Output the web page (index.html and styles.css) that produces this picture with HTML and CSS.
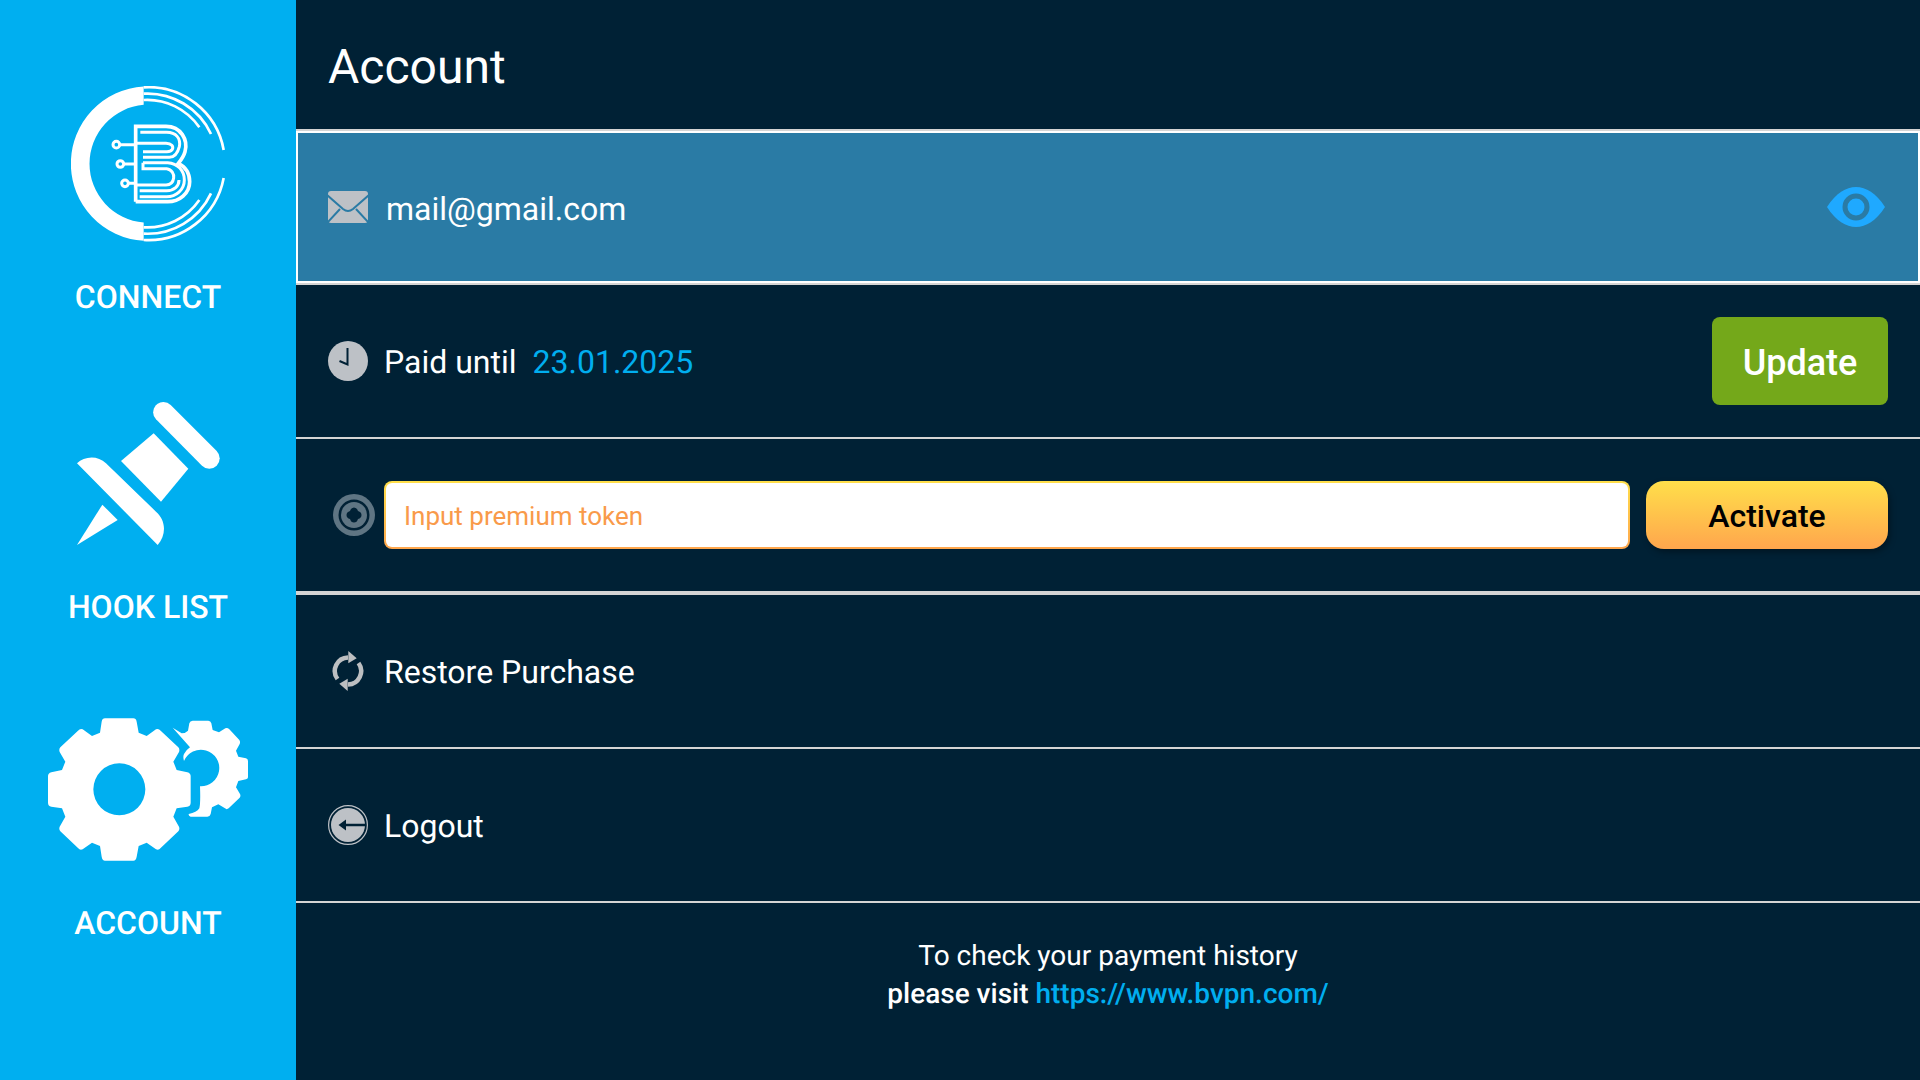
FILE: index.html
```html
<!DOCTYPE html>
<html lang="en">
<head>
<meta charset="utf-8">
<title>Account</title>
<link rel="stylesheet" href="styles.css">
</head>
<body>
<div class="app">
  <nav class="sidebar">
    <a class="nav-item nav-connect">
      <svg class="icon-logo" viewBox="210 108 465 468">
        <path class="fill-white" d="M428 109.400A232 232 0 0 0 428 572.600V517.400A177 177 0 0 1 428 164.600Z"/>
        <g class="logo-arcs">
          <path d="M428 112A229 229 0 0 1 668 300M428 131A210 210 0 0 1 630 252M428 150A190 190 0 0 1 595 232"/>
          <path d="M428 570A229 229 0 0 0 668 384M428 551A210 210 0 0 0 630 430M428 532A190 190 0 0 0 595 450"/>
        </g>
        <g class="logo-lines">
          <path class="logo-outer" d="M404 455V229H495C540 229 562 270 552 305C548 320 540 330 532 340C552 350 566 370 566 395C566 430 535 455 500 455H404"/>
          <path d="M418 247H497C525 247 540 265 535 290C530 310 520 322 505 322H426"/>
          <path d="M404 280H495C512 280 518 290 514 298C510 304 505 305 498 305H426"/>
          <path d="M426 338H500C530 340 550 362 550 390C550 420 525 440 497 440H416"/>
          <path d="M426 338V356H497C512 358 520 372 518 384C516 398 508 405 495 405H404M416 422H497C520 422 534 408 534 390"/>
          <path d="M356 284H404M368 342H404M382 400H404"/>
          <circle cx="346" cy="284" r="10"/>
          <circle cx="358" cy="342" r="10"/>
          <circle cx="372" cy="400" r="10"/>
        </g>
      </svg>
      <span class="nav-label">CONNECT</span>
    </a>
    <a class="nav-item nav-hook">
      <svg class="icon-pin" viewBox="228 66 429 429">
        <path class="fill-white" d="M487 66A31 31 0 0 0 465 118L603 257A31 31 0 0 0 647 213L509 75A31 31 0 0 0 487 66Z"/>
        <path class="fill-white" d="M458 160L562 266L480 365L360 243Z"/>
        <path class="fill-white" d="M228 250C250 228 290 225 315 250L465 395C495 420 497 465 470 495Z"/>
        <path class="fill-white" d="M228 495L304 374L350 420Z"/>
      </svg>
      <span class="nav-label">HOOK LIST</span>
    </a>
    <a class="nav-item nav-account">
      <svg class="icon-gears" viewBox="144 85 600 427">
        <path class="fill-white" fill-rule="evenodd" d="M315 85H400Q408 85 410 95L416 128L440 138L468 118Q476 115 482 122L535 172Q540 178 537 186L520 215L530 240L562 247Q572 250 572 258V338Q572 348 562 350L530 355L520 380L537 410Q540 418 535 424L482 474Q476 482 468 478L440 458L416 468L410 500Q408 512 400 512H315Q307 512 305 500L300 468L276 458L248 478Q240 482 234 474L181 424Q176 418 179 410L196 380L186 355L154 350Q144 348 144 338V258Q144 250 154 247L186 240L196 215L179 186Q176 178 181 172L234 122Q240 115 248 118L276 138L300 128L305 95Q307 85 315 85ZM358 220A78 78 0 1 0 358 376A78 78 0 1 0 358 220Z"/>
        <path class="fill-white" d="M518 113L545 130Q556 130 564 122L568 100Q570 92 578 92H625Q632 92 634 100L638 120L657 127L676 115Q682 112 688 118L718 150Q722 156 719 162L708 182L715 200L738 205Q744 207 744 213V262Q744 266 738 268L715 273L708 292L720 312Q723 318 719 323L686 355Q680 360 675 355L655 343L636 352L632 372Q630 380 622 380H572Q565 378 566 372Q590 368 598 355Q602 340 600 289A55 55 0 1 0 552 213Q548 200 552 192Q558 180 570 172Z"/>
      </svg>
      <span class="nav-label">ACCOUNT</span>
    </a>
  </nav>

  <main class="main">
    <header class="header"><h1 class="title">Account</h1></header>

    <div class="email-wrap">
      <div class="row-email">
        <svg class="icon-mail" viewBox="0 0 40 32">
          <rect class="fill-gray" width="40" height="32" rx="3"/>
          <path class="cut-blue" d="M-1 4L15 18Q20 22 25 18L41 4M-1 32L12 18M41 32L28 18"/>
        </svg>
        <span class="row-text email-text">mail@gmail.com</span>
        <svg class="icon-eye" viewBox="0 0 58 40">
          <path class="fill-eye" d="M0 20C9 6 19 0 29 0C39 0 49 6 58 20C49 34 39 40 29 40C19 40 9 34 0 20Z"/>
          <circle class="ring-eye" cx="29" cy="20" r="11"/>
        </svg>
      </div>
    </div>

    <div class="row">
      <svg class="icon-40" viewBox="0 0 40 40">
        <circle class="fill-gray" cx="20" cy="20" r="20"/>
        <path class="clock-hands" d="M19.5 7V23.5L11.5 20"/>
      </svg>
      <span class="row-text">Paid until</span>
      <span class="row-text date">23.01.2025</span>
      <button class="btn-update">Update</button>
    </div>

    <div class="row row-token">
      <svg class="icon-token" viewBox="0 0 42 42">
        <circle class="fill-slate" cx="21" cy="21" r="21"/>
        <circle class="fill-dark" cx="21" cy="21" r="15.5"/>
        <circle class="fill-slate" cx="21" cy="21" r="13"/>
        <path class="fill-dark" d="M21 13.500Q24 13.500 25 17Q28.500 18 28.500 21Q28.500 24 25 25Q24 28.500 21 28.500Q18 28.500 17 25Q13.500 24 13.500 21Q13.500 18 17 17Q18 13.500 21 13.500Z"/>
      </svg>
      <input class="token-input" type="text" placeholder="Input premium token">
      <button class="btn-activate">Activate</button>
    </div>

    <div class="row">
      <svg class="icon-refresh" viewBox="0 0 32 40">
        <path class="refresh-arc" d="M16 6.5A13.5 13.5 0 0 0 5.5 28"/>
        <path class="refresh-arc" d="M16 33.500A13.500 13.500 0 0 0 26.500 12"/>
        <path class="fill-light" d="M16.300 0L24.700 7.300L16.300 12.300Z"/>
        <path class="fill-light" d="M15.700 40L7.300 32.700L15.700 27.700Z"/>
      </svg>
      <span class="row-text">Restore Purchase</span>
    </div>

    <div class="row">
      <svg class="icon-40" viewBox="0 0 40 40">
        <circle class="logout-ring" cx="20" cy="20" r="19.400"/>
        <circle class="fill-gray" cx="20" cy="20" r="17"/>
        <path class="logout-line" d="M15 20H38"/>
        <path class="fill-dark" d="M10.500 20L18 14.500V25.500Z"/>
      </svg>
      <span class="row-text">Logout</span>
    </div>

    <footer class="footer">
      <p class="footer-line">To check your payment history</p>
      <p class="footer-line footer-strong">please visit <a class="footer-link">https://www.bvpn.com/</a></p>
    </footer>
  </main>
</div>
</body>
</html>
```

FILE: styles.css
```css
* { box-sizing: border-box; }
html, body { margin: 0; padding: 0; height: 100%; }
body { font-family: Roboto, "Liberation Sans", sans-serif; background: #002135; color: #fff; overflow: hidden; text-rendering: geometricPrecision; }
.app { display: flex; width: 1920px; height: 1080px; }

.sidebar { width: 296px; flex: none; background: #00aff0; display: flex; flex-direction: column; align-items: center; padding-top: 86px; }
.nav-item { display: flex; flex-direction: column; align-items: center; }
.nav-label { font-size: 32px; font-weight: 500; line-height: 40px; color: #fff; white-space: nowrap; }
.nav-connect .nav-label { margin-top: 35px; }
.nav-hook { margin-top: 85px; }
.nav-hook .nav-label { margin-top: 42px; }
.nav-account { margin-top: 91px; }
.nav-account .nav-label { margin-top: 42px; }
.icon-logo { width: 155px; height: 156px; }
.icon-pin { width: 143px; height: 143px; }
.icon-gears { width: 200px; height: 143px; }
.fill-white { fill: #fff; }
.logo-arcs { fill: none; stroke: #fff; stroke-width: 8; }
.logo-lines { fill: none; stroke: #fff; stroke-width: 9; }
.logo-outer { stroke-width: 11; }

.main { flex: 1; min-width: 0; display: flex; flex-direction: column; background: #002135; }
.header { height: 129px; display: flex; align-items: center; padding: 5px 0 0 32px; }
.title { margin: 0; font-size: 48px; font-weight: 400; line-height: 56px; }

.email-wrap { border-top: 2px solid #d4d4d4; border-bottom: 2px solid #d4d4d4; }
.row-email { height: 152px; background: #2a7ba5; border: 2px solid #fff; display: flex; align-items: center; padding: 0 33px 0 30px; }
.row-text.email-text { margin-left: 18px; flex: 1; padding-top: 4px; }
.icon-mail { width: 40px; height: 32px; flex: none; }
.icon-eye { width: 58px; height: 40px; flex: none; }
.cut-blue { fill: none; stroke: #2a7ba5; stroke-width: 2; }
.fill-eye { fill: #1fa9ff; }
.ring-eye { fill: #1fa9ff; stroke: #2a7ba5; stroke-width: 5; }

.row { height: 154px; border-bottom: 2px solid #d4d4d4; display: flex; align-items: center; padding: 0 32px; }
.row-token { height: 156px; border-bottom-width: 4px; }
.row-text { font-size: 32px; line-height: 40px; padding-top: 2px; box-sizing: content-box; color: #fff; white-space: nowrap; margin-left: 16px; }
.date { color: #00aeef; margin-right: auto; }
.icon-40 { width: 40px; height: 40px; flex: none; }
.fill-gray { fill: #bdc1c6; }
.fill-light { fill: #bdbfc1; }
.fill-dark { fill: #002135; }
.fill-slate { fill: #5f7583; }
.clock-hands { fill: none; stroke: #002135; stroke-width: 2; }
.btn-update { width: 176px; height: 88px; flex: none; border: 0; padding: 4px 0 0; border-radius: 8px; background: #74a81a; color: #fff; font: 500 36px Roboto, sans-serif; }

.icon-token { width: 42px; height: 42px; flex: none; margin-left: 5px; }
.token-input { flex: 1; min-width: 0; height: 68px; margin-left: 9px; padding: 2px 18px 0; border: 2px solid transparent; border-radius: 8px; background: linear-gradient(#fff, #fff) padding-box, linear-gradient(#ffdf4a, #ffa64d) border-box; font: 400 26px Roboto, sans-serif; color: #f99a4a; outline: none; }
.token-input::placeholder { color: #f99a4a; opacity: 1; }
.btn-activate { width: 242px; height: 68px; flex: none; margin-left: 16px; border: 0; padding: 1px 0 0; border-radius: 18px; background: linear-gradient(#ffdf4a, #ffa64d); color: #000; font: 500 32px Roboto, sans-serif; box-shadow: 2px 3px 6px rgba(0, 0, 0, 0.35); }

.icon-refresh { width: 32px; height: 40px; flex: none; margin-right: 4px; margin-left: 4px; }
.refresh-arc { fill: none; stroke: #bdbfc1; stroke-width: 4.5; }
.logout-ring { fill: none; stroke: #bdc1c6; stroke-width: 1.2; }
.logout-line { fill: none; stroke: #002135; stroke-width: 2.5; }

.footer { flex: 1; padding-top: 34px; text-align: center; }
.footer-line { margin: 0; font-size: 28px; line-height: 38px; color: #fff; }
.footer-strong { font-weight: 500; }
.footer-link { color: #00aeef; }
```
